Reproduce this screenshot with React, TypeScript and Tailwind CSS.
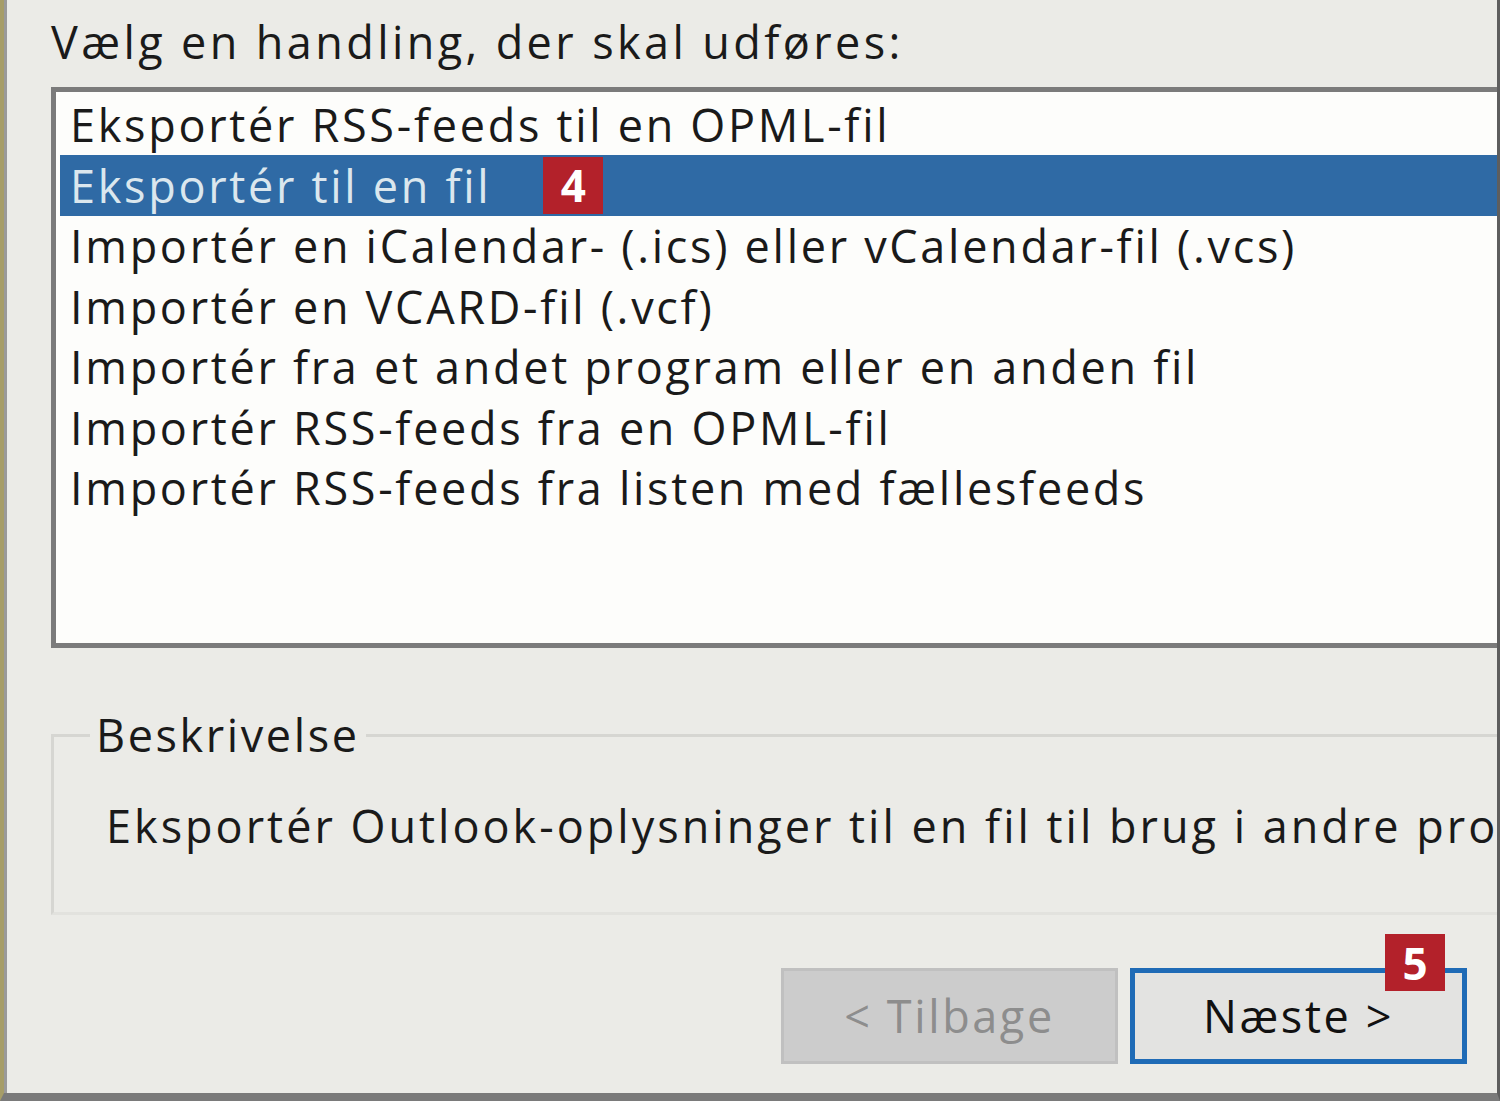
import React from 'react';

const items = [
  'Eksportér RSS-feeds til en OPML-fil',
  'Eksportér til en fil',
  'Importér en iCalendar- (.ics) eller vCalendar-fil (.vcs)',
  'Importér en VCARD-fil (.vcf)',
  'Importér fra et andet program eller en anden fil',
  'Importér RSS-feeds fra en OPML-fil',
  'Importér RSS-feeds fra listen med fællesfeeds',
];

const SELECTED = 1;

function Badge({ n }: { n: number }) {
  return (
    <span className="inline-flex items-center justify-center w-[60px] h-[57px] bg-[#b3212a] text-white font-bold text-[44px] leading-none tracking-normal">
      {n}
    </span>
  );
}

export default function App() {
  return (
    <div
      className="w-[1500px] h-[1101px] overflow-hidden bg-[#ebebe7] text-[#1a1a1a] border-l-[4px] border-l-[#a69d68] border-r-[3px] border-r-[#5e5e5e] border-b-[8px] border-b-[#7a7a7a] flex flex-col font-medium"
      style={{ fontFamily: '"Open Sans", "Noto Sans", sans-serif' }}
    >
      <div className="border-l-[3px] border-[#9a9a9a] flex-1 flex flex-col pl-[44px]">
        {/* Heading */}
        <p className="text-[45px] leading-[60px] mt-[12px] tracking-[3.4px] whitespace-nowrap">
          Vælg en handling, der skal udføres:
        </p>

        {/* List box */}
        <div className="mt-[15px] w-[1500px] h-[561px] border-[5px] border-[#7b7b7b] bg-[#fdfdfb] pt-[2px] pl-[4px]">
          {items.map((label, i) => (
            <div
              key={label}
              className={
                i === SELECTED
                  ? 'h-[61px] flex items-center gap-[52px] pl-[10px] bg-[#2f6aa5] text-[#dbe7ee]'
                  : 'h-[60.5px] flex items-center pl-[10px]'
              }
            >
              <span className="text-[45px] leading-none whitespace-nowrap tracking-[2.7px]">{label}</span>
              {i === SELECTED && <Badge n={4} />}
            </div>
          ))}
        </div>

        {/* Description group */}
        <fieldset className="mt-[67px] w-[1500px] h-[200px] border-[3px] border-[#d6d6d2] border-b-[#e2e2de] pl-[50px]">
          <legend className="px-[6px] ml-[-14px] text-[45px] leading-[40px] tracking-[2.6px]">Beskrivelse</legend>
          <p className="mt-[48px] text-[45px] leading-none whitespace-nowrap tracking-[3px] ml-[2px]">
            Eksportér Outlook-oplysninger til en fil til brug i andre programmer.
          </p>
        </fieldset>

        {/* Buttons */}
        <div className="mt-[53px] flex justify-end gap-[12px] pr-[30px]">
          <button className="w-[337px] h-[96px] bg-[#cccccc] border-[3px] border-[#c0c0c0] text-[#8d8d8d] text-[45px] tracking-[2.6px]">
            &lt; Tilbage
          </button>
          <div className="relative">
            <button className="w-[337px] h-[96px] bg-[#e3e3e1] border-[5px] border-[#1f6bb6] text-[#111] text-[45px] tracking-[2.6px]">
              Næste &gt;
            </button>
            <span className="absolute top-[-34px] right-[22px]">
              <Badge n={5} />
            </span>
          </div>
        </div>
      </div>
    </div>
  );
}
